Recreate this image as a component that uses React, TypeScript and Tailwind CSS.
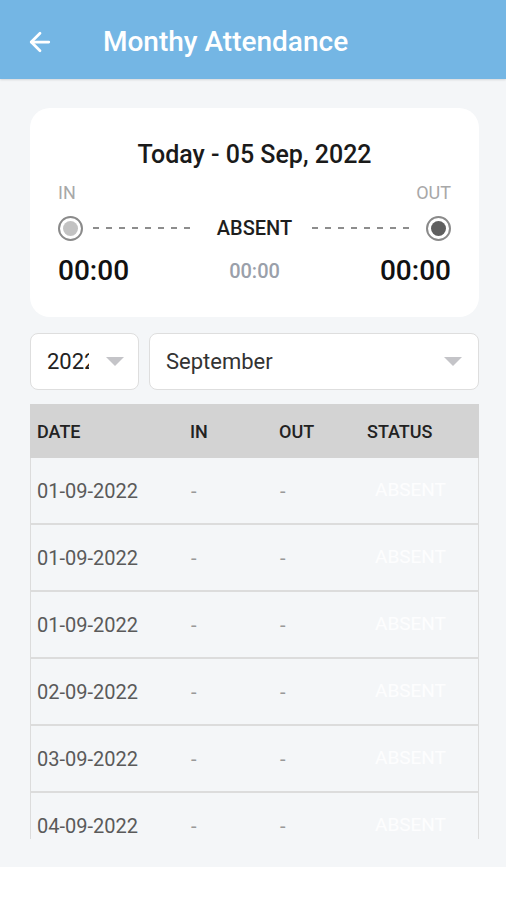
import { ArrowLeft } from "lucide-react";

const rows = [
  "01-09-2022",
  "01-09-2022",
  "01-09-2022",
  "02-09-2022",
  "03-09-2022",
  "04-09-2022",
];

function Caret() {
  return (
    <svg width="18" height="10" viewBox="0 0 18 10" aria-hidden="true">
      <path d="M0 0h18L9 9z" fill="#c4c4c8" />
    </svg>
  );
}

const dash =
  "mx-[10px] h-[2px] flex-1 bg-[repeating-linear-gradient(90deg,#8d8d8d_0_6px,transparent_6px_13px)]";

export default function App() {
  return (
    <div className="min-h-[900px] bg-white font-['Roboto',sans-serif]">
      <div className="h-[867px] bg-[#f4f6f8]">
        <header className="flex h-[79px] items-center bg-[#74b6e4] pt-[4px] shadow-[0_1px_2px_rgba(0,0,0,0.12)]">
          <ArrowLeft className="ml-[25px] h-[30px] w-[30px] text-white" strokeWidth={2.2} />
          <h1 className="ml-[48px] text-[28px] font-medium text-white">Monthy Attendance</h1>
        </header>

        <div className="pl-[30px] pr-[27px] pt-[29px]">
          <section className="rounded-[20px] bg-white px-[28px] pb-[28px] pt-[31px]">
            <h2 className="text-center text-[25px] font-medium leading-[32px] text-[#1a1a1a]">
              Today - 05 Sep, 2022
            </h2>
            <div className="mt-[10px] flex justify-between text-[18px] leading-[24px] text-[#a8a8a8]">
              <span>IN</span>
              <span>OUT</span>
            </div>
            <div className="mt-[8px] flex items-center">
              <span className="flex h-[25px] w-[25px] shrink-0 items-center justify-center rounded-full border-2 border-[#8a8a8a]">
                <span className="h-[15px] w-[15px] rounded-full bg-[#c2c2c2]" />
              </span>
              <span className={dash} />
              <span className="px-[10px] text-[20px] font-medium text-[#1e1e1e]">ABSENT</span>
              <span className={dash} />
              <span className="flex h-[25px] w-[25px] shrink-0 items-center justify-center rounded-full border-2 border-[#8a8a8a]">
                <span className="h-[15px] w-[15px] rounded-full bg-[#5f5f5f]" />
              </span>
            </div>
            <div className="mt-[10px] flex items-center justify-between">
              <span className="text-[28px] font-medium leading-[36px] text-[#111]">00:00</span>
              <span className="text-[20px] font-medium text-[#9aa0aa]">00:00</span>
              <span className="text-[28px] font-medium leading-[36px] text-[#111]">00:00</span>
            </div>
          </section>

          <div className="mt-[16px] flex gap-[10px]">
            <div className="flex h-[57px] w-[109px] items-center justify-between rounded-[8px] border border-[#dedede] bg-white pl-[16px] pr-[14px]">
              <span className="w-[42px] overflow-hidden whitespace-nowrap text-[22px] text-[#222]">2022</span>
              <Caret />
            </div>
            <div className="flex h-[57px] flex-1 items-center justify-between rounded-[8px] border border-[#dedede] bg-white pl-[16px] pr-[16px]">
              <span className="text-[22px] text-[#333]">September</span>
              <Caret />
            </div>
          </div>

          <div className="mt-[14px] h-[435px] overflow-hidden">
            <div className="flex h-[54px] items-center bg-[#d3d3d3] text-[18px] font-medium text-[#222]">
              <span className="w-[160px] pl-[7px]">DATE</span>
              <span className="w-[89px]">IN</span>
              <span className="w-[88px]">OUT</span>
              <span>STATUS</span>
            </div>
            {rows.map((d, i) => (
              <div
                key={i}
                className="flex h-[67px] items-center border-x border-b-2 border-[#dcdcdc] bg-[#f4f6f8] text-[20px]"
              >
                <span className="w-[160px] pl-[6px] text-[#5a5a5a]">{d}</span>
                <span className="w-[89px] text-[#999]">-</span>
                <span className="w-[88px] text-[#999]">-</span>
                <span className="pl-[7px] text-[19px] text-white/80">ABSENT</span>
              </div>
            ))}
          </div>
        </div>
      </div>
    </div>
  );
}
